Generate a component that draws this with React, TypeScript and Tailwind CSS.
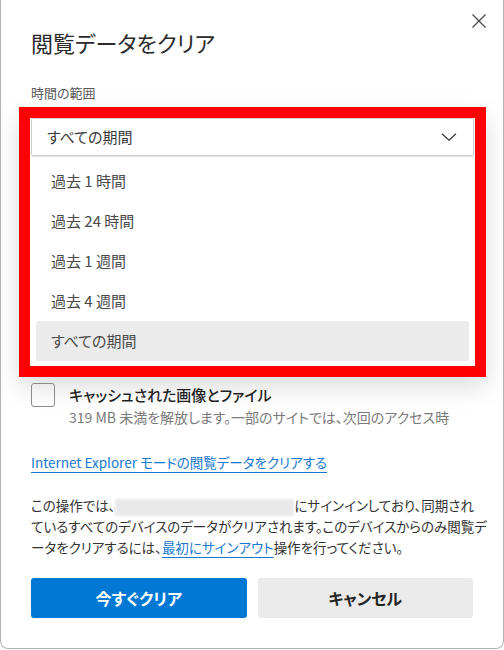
import React from 'react';

const ranges = ['過去 1 時間', '過去 24 時間', '過去 1 週間', '過去 4 週間', 'すべての期間'];

const ClearDataDialog: React.FC = () => {
  const selected = 'すべての期間';

  return (
    <div className="w-[504px] h-[650px] bg-white overflow-hidden font-['Noto_Sans_CJK_JP',sans-serif] [font-feature-settings:'palt']">
      <div className="relative h-[649px] bg-white border-x border-b border-[#b4b4b4] rounded-b-[8px] px-[30px]">
        {/* close */}
        <button className="absolute right-[16px] top-[13px] w-[16px] h-[16px] text-[#444]">
          <svg viewBox="0 0 16 16" className="w-[16px] h-[16px]" fill="none" stroke="currentColor" strokeWidth={1.2}>
            <path d="M1.5 1.5l13 13M14.5 1.5l-13 13" />
          </svg>
        </button>

        <h1 className="pt-[24px] text-[22px] leading-[36px] text-[#2b2b2b] font-normal">閲覧データをクリア</h1>

        <div className="mt-[24px] text-[13px] leading-[18px] text-[#5a5a5a]">時間の範囲</div>

        {/* dropdown, highlighted with the red frame */}
        <div className="mt-[5px] -ml-[12px] -mr-[13px] border-[11px] border-[#ff0000] bg-white shadow-[0_10px_24px_rgba(0,0,0,0.14)]">
          <div className="mx-px h-[38px] flex items-center justify-between pl-[15px] pr-[16px] border border-[#cfcfcf] rounded-[2px] shadow-[0_1px_1px_rgba(0,0,0,0.12)] text-[15px] text-[#3a3a3a]">
            <span>{selected}</span>
            <svg viewBox="0 0 16 8" className="w-[16px] h-[8px]" fill="none" stroke="#3a3a3a" strokeWidth={1.3}>
              <path d="M1 0.8l7 6.4 7-6.4" />
            </svg>
          </div>
          <div className="pt-[5px] pb-[5px] pl-[6px] pr-[6px]">
            {ranges.map((r) => (
              <div
                key={r}
                className={`h-[40px] flex items-center pl-[15px] rounded-[3px] text-[15px] text-[#4a4a4a] ${
                  r === selected ? 'bg-[#ebebeb]' : ''
                }`}
              >
                {r}
              </div>
            ))}
          </div>
        </div>

        {/* cached images */}
        <div className="mt-[6px] flex gap-[14px]">
          <div className="w-[24px] h-[24px] rounded-[3px] border border-[#8c8c8c] shrink-0" />
          <div>
            <div className="text-[15px] leading-[24px] font-medium text-[#1f1f1f]">キャッシュされた画像とファイル</div>
            <div className="text-[14px] leading-[20px] text-[#7a7a7a] whitespace-nowrap">319 MB 未満を解放します。一部のサイトでは、次回のアクセス時</div>
          </div>
        </div>

        <a className="mt-[25px] inline-block text-[13.5px] leading-[20px] text-[#1778d2] underline underline-offset-[4px] decoration-[#1778d2]">
          Internet Explorer モードの閲覧データをクリアする
        </a>

        <p className="mt-[22px] text-[13.5px] leading-[21px] text-[#333] whitespace-nowrap">
          この操作では、
          <span className="inline-block align-middle w-[179px] h-[17px] bg-[#e9e9e9] blur-[1.5px]" />
          にサインインしており、同期され
          <br />
          ているすべてのデバイスのデータがクリアされます。このデバイスからのみ閲覧デ
          <br />
          ータをクリアするには、
          <a className="text-[#1778d2] underline underline-offset-[4px]">最初にサインアウト</a>
          操作を行ってください。
        </p>

        <div className="mt-[20px] grid grid-cols-2 gap-[11px]">
          <button className="h-[40px] rounded-[3px] bg-[#0078d4] text-white text-[16px] font-bold">今すぐクリア</button>
          <button className="h-[40px] rounded-[3px] bg-[#ebebeb] text-[#262626] text-[16px] font-bold">キャンセル</button>
        </div>
      </div>
    </div>
  );
};

export default function App() {
  return <ClearDataDialog />;
}
